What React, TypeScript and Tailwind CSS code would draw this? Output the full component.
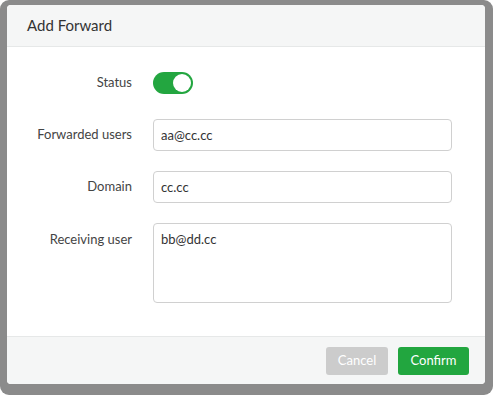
import { useState } from 'react';

const FONT = '[font-family:Lato,"Noto_Sans",sans-serif]';

function Row({ label, children, top }: { label: string; children: React.ReactNode; top?: boolean }) {
  return (
    <div className={'flex min-h-8 gap-[21px] ' + (top ? 'items-start' : 'items-center')}>
      <div className={'w-[125px] flex-none text-right text-[13px] text-[#444] ' + (top ? 'pt-[7px]' : '')}>
        {label}
      </div>
      {children}
    </div>
  );
}

export default function App() {
  const [on, setOn] = useState(true);
  return (
    <div className={'h-[395px] w-[493px] bg-white ' + FONT}>
      <div className="h-full w-full rounded-[9px] bg-[#8b8b8b] pb-[11px] pl-[7px] pr-[8px] pt-[5px]">
        <div className="flex h-full flex-col overflow-hidden rounded-[4px] bg-white">
          <div className="flex h-[42px] flex-none items-center border-b border-[#e6e8e8] bg-[#f5f6f6] px-5 text-[15px] text-[#333]">
            Add Forward
          </div>
          <div className="flex flex-1 flex-col gap-5 pt-5">
            <Row label="Status">
              <button
                type="button"
                onClick={() => setOn(!on)}
                className="flex h-[22px] w-10 items-center justify-end rounded-full bg-[#23a640] px-[2px]"
              >
                <span className="h-[18px] w-[18px] rounded-full bg-white" />
              </button>
            </Row>
            <Row label="Forwarded users">
              <input
                defaultValue="aa@cc.cc"
                className="h-8 w-[299px] rounded-[4px] border border-[#d0d0d0] px-[7px] text-[13px] text-[#333] outline-none"
              />
            </Row>
            <Row label="Domain">
              <input
                defaultValue="cc.cc"
                className="h-8 w-[299px] rounded-[4px] border border-[#d0d0d0] px-[7px] text-[13px] text-[#333] outline-none"
              />
            </Row>
            <Row label="Receiving user" top>
              <textarea
                defaultValue="bb@dd.cc"
                className="h-20 w-[299px] resize-none rounded-[4px] border border-[#d0d0d0] px-[7px] pt-[6px] text-[13px] text-[#333] outline-none"
              />
            </Row>
          </div>
          <div className="flex h-[48px] flex-none items-center justify-end gap-[10px] border-t border-[#e6e8e8] bg-[#f5f6f6] pr-[16px]">
            <button type="button" className="h-[28px] w-[62px] rounded-[3px] bg-[#cccccc] text-[13px] text-white">
              Cancel
            </button>
            <button type="button" className="h-[28px] w-[71px] rounded-[3px] bg-[#22a63f] text-[13px] text-white">
              Confirm
            </button>
          </div>
        </div>
      </div>
    </div>
  );
}
